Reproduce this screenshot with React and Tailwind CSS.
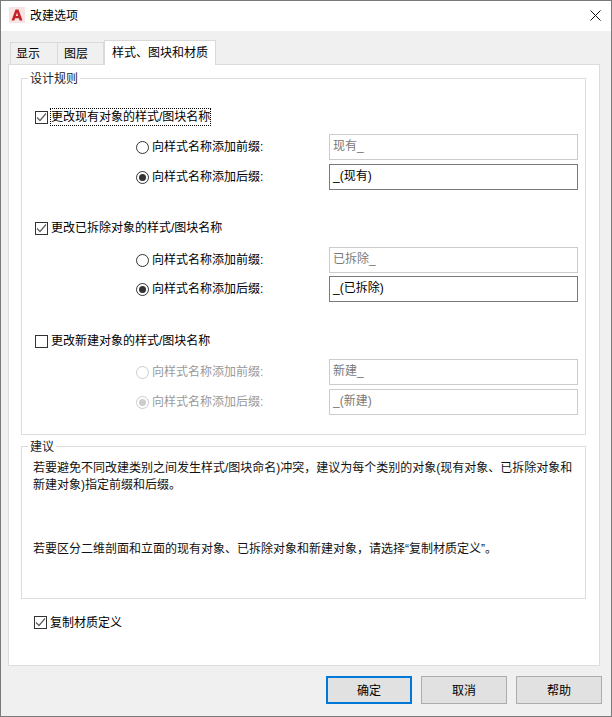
import React from "react";

const FONT = "font-['Liberation_Sans','Noto_Sans_CJK_SC',sans-serif]";

function CheckBox({ checked, className }) {
  return (
    <span className={`w-[13px] h-[13px] border border-[#333333] bg-white flex items-center justify-center shrink-0 ${className || ""}`}>
      {checked && (
        <svg width="11" height="11" viewBox="0 0 11 11" fill="none">
          <path d="M1 5.5 L4 8.5 L10 1.5" stroke="#606060" strokeWidth="1.2" />
        </svg>
      )}
    </span>
  );
}

function Radio({ selected, disabled }) {
  return (
    <span
      className={`w-[13px] h-[13px] rounded-full border bg-white flex items-center justify-center shrink-0 ${
        disabled ? "border-[#cccccc]" : "border-[#333333]"
      }`}
    >
      {selected && (
        <span className={`w-[7px] h-[7px] rounded-full ${disabled ? "bg-[#cccccc]" : "bg-[#333333]"}`} />
      )}
    </span>
  );
}

function OptionRow({ label, value, selected, active, disabled }) {
  return (
    <div className="flex items-center h-[26px]">
      <div className="w-[193px] pl-[114px] flex items-center shrink-0 box-content">
        <Radio selected={selected} disabled={disabled} />
        <span className={`ml-[3px] whitespace-nowrap ${disabled ? "text-[#9a9a9a]" : "text-black"}`}>{label}</span>
      </div>
      <div
        className={`w-[249px] h-[26px] border-[1.5px] pl-[3px] leading-[22px] bg-white ${
          active ? "border-[#7a7a7a] text-black" : "border-[#cccccc] text-[#7a7a7a]"
        }`}
      >
        {value}
      </div>
    </div>
  );
}

function RuleSection({ title, checked, focused, prefix, suffix, enabled, disabled, className, optionsClass }) {
  return (
    <div className={className}>
      <div className="flex items-start h-[16px] pl-[13px]">
        <CheckBox checked={checked} className="mt-[3px]" />
        <span className={`ml-[3px] mt-[1px] leading-[16px] whitespace-nowrap ${focused ? "outline-1 outline-dotted outline-black" : ""}`}>
          {title}
        </span>
      </div>
      <div className={`flex flex-col ${optionsClass}`}>
        <OptionRow label="向样式名称添加前缀:" value={prefix} disabled={disabled} />
        <OptionRow label="向样式名称添加后缀:" value={suffix} selected active={enabled} disabled={disabled} />
      </div>
    </div>
  );
}

function GroupBox({ legend, className, children }) {
  return (
    <div className={`relative border-[1.5px] border-[#dcdcdc] ${className}`}>
      <span className="absolute -top-[8px] left-[6px] bg-white px-[2px] leading-[16px] text-[#222222]">{legend}</span>
      {children}
    </div>
  );
}

function Btn({ children, primary }) {
  return (
    <button
      className={`w-[86px] h-[28px] pt-[2px] bg-[#e1e1e1] text-black flex items-center justify-center ${
        primary ? "border-2 border-[#0078d7]" : "border border-[#adadad]"
      }`}
    >
      {children}
    </button>
  );
}

export default function App() {
  return (
    <div className={`${FONT} w-[612px] h-[717px] border border-[#7a7a7a] bg-[#f0f0f0] text-[12px] text-black flex flex-col overflow-hidden`}>
      {/* 标题栏 */}
      <div className="h-[30px] bg-white flex items-center shrink-0 pl-[8px] pr-[10px] pb-[2px]">
        <span className="w-[16px] h-[16px] bg-[#f8e4e2] flex items-center justify-center">
          <svg width="12" height="12" viewBox="0 0 12 12">
            <path d="M0.5 11.5 L4.5 0.5 L7.5 0.5 L11.5 11.5 L8.6 11.5 L7.9 9.2 L4.1 9.2 L3.4 11.5 Z M4.9 6.9 L7.1 6.9 L6 3.4 Z" fill="#c4232b" fillRule="evenodd" />
          </svg>
        </span>
        <span className="ml-[5px] pt-[2px] text-[12px]">改建选项</span>
        <svg className="ml-auto" width="11" height="11" viewBox="0 0 11 11">
          <path d="M0.5 0.5 L10.5 10.5 M10.5 0.5 L0.5 10.5" stroke="#111111" strokeWidth="1" />
        </svg>
      </div>

      {/* 选项卡 */}
      <div className="h-[33px] pl-[9px] flex items-end shrink-0">
        <div className="w-[48px] h-[22px] border border-b-0 border-[#d9d9d9] bg-[#f0f0f0] pl-[5px] leading-[22px]">显示</div>
        <div className="w-[46px] h-[22px] border border-l-0 border-b-0 border-[#d9d9d9] bg-[#f0f0f0] pl-[6px] leading-[22px]">图层</div>
        <div className="relative z-10 -mb-px w-[112px] h-[25px] border border-b-0 border-[#d9d9d9] bg-white pl-[7px] leading-[24px]">样式、图块和材质</div>
      </div>

      {/* 主面板 */}
      <div className="ml-[7px] w-[592px] h-[602px] border-[1.5px] border-[#dcdcdc] bg-white pt-[13px] pl-[12px] shrink-0">
        <GroupBox legend="设计规则" className="w-[565px] h-[357px] pt-[29px]">
          <RuleSection optionsClass="mt-[10px] gap-[4px]" title="更改现有对象的样式/图块名称" checked focused prefix="现有_" suffix="_(现有)" enabled />
          <RuleSection className="mt-[29px]" optionsClass="mt-[12px] gap-[3px]" title="更改已拆除对象的样式/图块名称" checked prefix="已拆除_" suffix="_(已拆除)" enabled />
          <RuleSection className="mt-[30px]" optionsClass="mt-[11px] gap-[4px]" title="更改新建对象的样式/图块名称" prefix="新建_" suffix="_(新建)" disabled />
        </GroupBox>

        <GroupBox legend="建议" className="mt-[11px] w-[565px] h-[153px] pt-[13px] pl-[11px] leading-[17px] text-[#111111]">
          <p className="whitespace-nowrap">若要避免不同改建类别之间发生样式/图块命名)冲突，建议为每个类别的对象(现有对象、已拆除对象和</p>
          <p className="whitespace-nowrap">新建对象)指定前缀和后缀。</p>
          <p className="mt-[47px] whitespace-nowrap">若要区分二维剖面和立面的现有对象、已拆除对象和新建对象，请选择“复制材质定义”。</p>
        </GroupBox>

        <div className="mt-[17px] pl-[13px] flex items-center h-[13px]">
          <CheckBox checked />
          <span className="ml-[3px]">复制材质定义</span>
        </div>
      </div>

      {/* 按钮 */}
      <div className="mt-[10px] pl-[325px] flex gap-[9px]">
        <Btn primary>确定</Btn>
        <Btn>取消</Btn>
        <Btn>帮助</Btn>
      </div>
    </div>
  );
}
